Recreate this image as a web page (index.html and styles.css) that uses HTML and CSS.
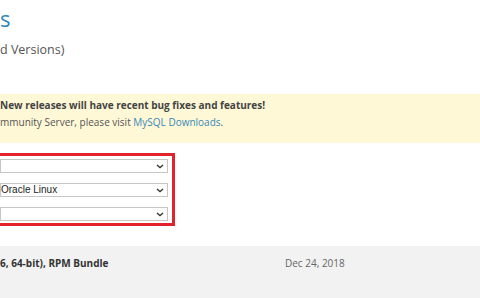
FILE: index.html
```html
<!DOCTYPE html>
<html lang="en">

<head>
    <meta name="viewport" content="width=device-width, initial-scale=1.0">
    <title>MySQL Product Archives</title>
    <link rel="stylesheet" href="styles.css">
</head>

<body>
    <div class="page">
        <h1 class="title">s</h1>
        <p class="subtitle">d Versions)</p>

        <div class="notice">
            <p class="notice-strong">New releases will have recent bug fixes and features!</p>
            <p>mmunity Server, please visit <a href="#">MySQL Downloads</a>.</p>
        </div>

        <div class="filters">
            <div class="select">
                <select id="version"><option></option></select>
                <svg class="chev" width="8" height="5" viewBox="0 0 8 5"><path d="M1 1l3 2.6L7 1" fill="none" stroke="#333" stroke-width="1.3"/></svg>
            </div>
            <div class="select">
                <select id="os"><option>Oracle Linux</option></select>
                <svg class="chev" width="8" height="5" viewBox="0 0 8 5"><path d="M1 1l3 2.6L7 1" fill="none" stroke="#333" stroke-width="1.3"/></svg>
            </div>
            <div class="select">
                <select id="osver"><option></option></select>
                <svg class="chev" width="8" height="5" viewBox="0 0 8 5"><path d="M1 1l3 2.6L7 1" fill="none" stroke="#333" stroke-width="1.3"/></svg>
            </div>
        </div>

        <div class="row">
            <div class="name">6, 64-bit), RPM Bundle</div>
            <div class="date">Dec 24, 2018</div>
        </div>
    </div>
</body>

</html>
```

FILE: styles.css
```css
body {
    margin: 0;
    padding: 0;
    background-color: #fff;
    font-family: 'Open Sans', 'Noto Sans', sans-serif;
    color: #444;
    overflow: hidden;
}

.page {
    padding-top: 4px;
}

.title {
    margin: 0;
    font-size: 22px;
    line-height: 28px;
    font-weight: normal;
    color: #2f87b5;
}

.subtitle {
    margin: 8px 0 0;
    font-size: 12.5px;
    line-height: 20px;
    color: #555;
}

.notice {
    margin-top: 34px;
    padding: 3px 0 13px 0;
    background-color: #fef8d6;
    font-size: 10px;
    line-height: 16.5px;
    color: #555;
}

.notice p {
    margin: 0;
}

.notice-strong {
    font-weight: bold;
    color: #444;
}

.notice a {
    color: #3789b8;
    text-decoration: none;
}

/* red highlight round the filter selects, left side runs off the page */
.filters {
    display: flex;
    flex-direction: column;
    gap: 10px;
    width: 186px;
    box-sizing: border-box;
    margin: 10px 0 0 -11px;
    padding: 3px 4px 2px 8px;
    border: 3px solid #e4222c;
}

.select {
    position: relative;
}

.select select {
    display: block;
    width: 100%;
    height: 14px;
    padding: 0 0 0 0;
    border: 1px solid #c6c6c6;
    border-radius: 0;
    background-color: #fff;
    appearance: none;
    font-family: 'Liberation Sans', Arial, sans-serif;
    font-size: 10px;
    line-height: 12px;
    color: #222;
}

.chev {
    position: absolute;
    right: 4px;
    top: 5px;
}

.row {
    display: flex;
    margin-top: 20px;
    height: 52px;
    box-sizing: border-box;
    padding-top: 9px;
    background-color: #f2f2f2;
    font-size: 10px;
    line-height: 16px;
}

.name {
    width: 285px;
    font-weight: bold;
    color: #333;
}

.date {
    color: #666;
}
```
